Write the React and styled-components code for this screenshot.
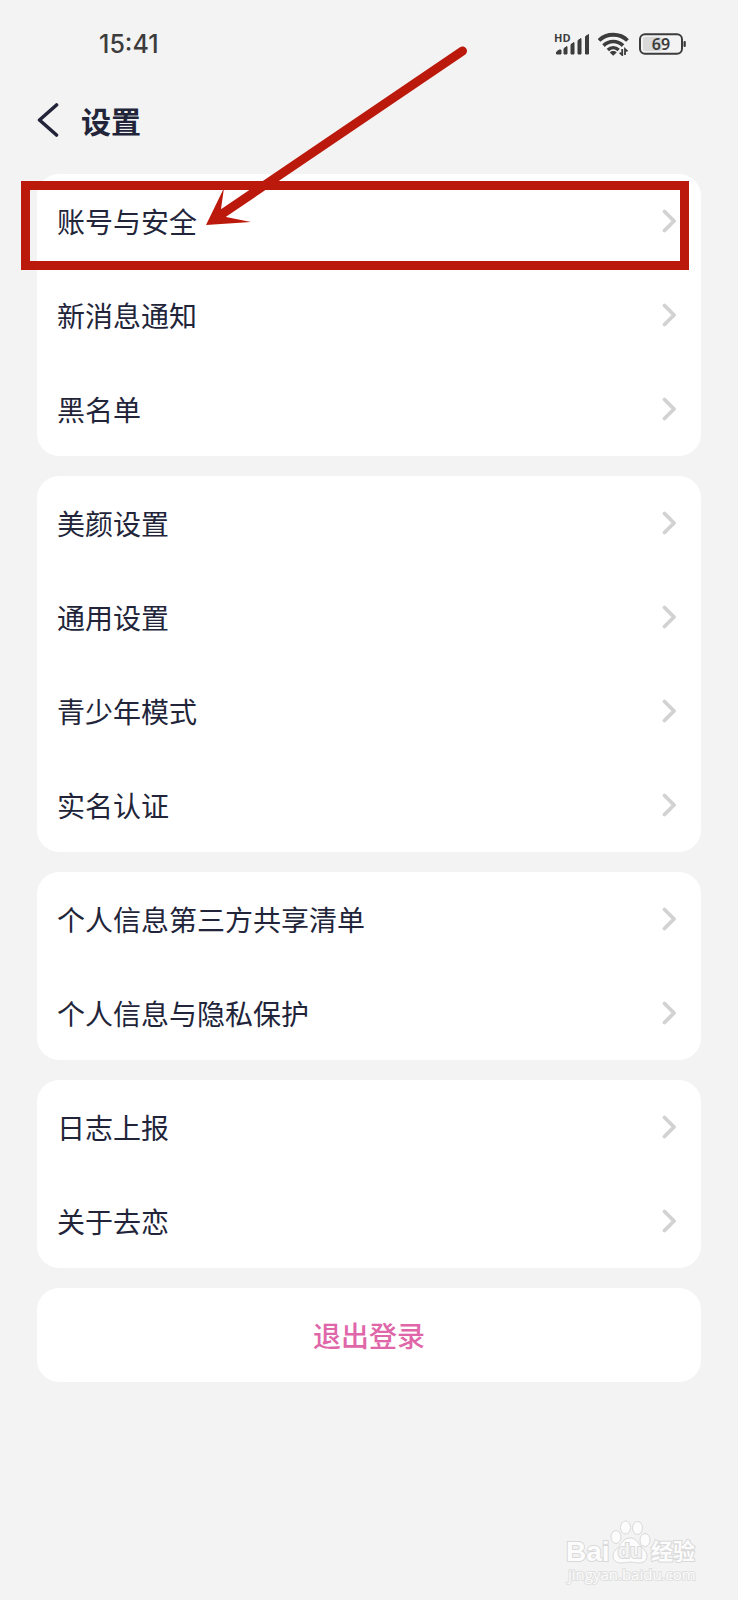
import React from "react";
import styled, { createGlobalStyle } from "styled-components";

const COLORS = {
  page: "#f3f3f3",
  card: "#ffffff",
  text: "#22253a",
  status: "#3c3c3c",
  chevron: "#d2d2d2",
  pink: "#df66a8",
  mark: "#bb190c",
};

const GlobalStyle = createGlobalStyle`
  * {
    box-sizing: border-box;
  }

  body {
    margin: 0;
    background: ${COLORS.page};
    color: ${COLORS.text};
    font-family: "Noto Sans CJK SC", sans-serif;
  }

  button {
    padding: 0;
    border: 0;
    background: none;
    color: inherit;
    font: inherit;
    cursor: pointer;
  }
`;

const Page = styled.div`
  position: relative;
  min-height: 100vh;
`;

const StatusBar = styled.div`
  display: flex;
  justify-content: space-between;
  align-items: center;
  height: 88px;
  padding: 0 52px 0 99px;
  color: ${COLORS.status};
`;

const Clock = styled.time`
  font-family: Inter, sans-serif;
  font-size: 25px;
  font-weight: 500;
  line-height: 32px;
`;

const StatusIcons = styled.div`
  display: flex;
  align-items: center;
  gap: 8px;

  svg {
    display: block;
  }
`;

const Header = styled.header`
  display: flex;
  align-items: center;
  gap: 22px;
  height: 64px;
  padding: 0 37px;
`;

const BackButton = styled.button`
  display: flex;
`;

const Title = styled.h1`
  margin: 0;
  font-size: 30px;
  font-weight: 700;
  line-height: 40px;
`;

const Content = styled.main`
  display: flex;
  flex-direction: column;
  gap: 20px;
  padding: 22px 37px 120px;
`;

const Card = styled.ul`
  margin: 0;
  padding: 0;
  border-radius: 22px;
  background: ${COLORS.card};
  list-style: none;
`;

const Item = styled.li`
  position: relative;
`;

const Row = styled.button`
  display: flex;
  justify-content: ${({ $centered }) => ($centered ? "center" : "space-between")};
  align-items: center;
  width: 100%;
  height: 94px;
  padding: 0 24px 0 ${({ $centered }) => ($centered ? 24 : 20)}px;
  color: ${({ $centered }) => ($centered ? COLORS.pink : COLORS.text)};
  font-size: 28px;
  font-weight: ${({ $centered }) => ($centered ? 500 : 400)};
  line-height: 40px;
`;

const LogoutCard = styled.div`
  border-radius: 22px;
  background: ${COLORS.card};
`;

const Highlight = styled.div`
  position: absolute;
  top: 7px;
  right: 12px;
  bottom: -2px;
  left: -16px;
  border: 9px solid ${COLORS.mark};
  pointer-events: none;
`;

const Pointer = styled.svg`
  position: absolute;
  top: -131px;
  left: 163px;
  pointer-events: none;
`;

const Watermark = styled.svg`
  position: absolute;
  right: 34px;
  bottom: 12px;
`;

const groups = [
  ["账号与安全", "新消息通知", "黑名单"],
  ["美颜设置", "通用设置", "青少年模式", "实名认证"],
  ["个人信息第三方共享清单", "个人信息与隐私保护"],
  ["日志上报", "关于去恋"],
];

const highlighted = "账号与安全";

const BackIcon = () => (
  <svg width="22" height="36" viewBox="0 0 22 36" fill="none" aria-hidden="true">
    <path
      d="M19.500 3 2.500 18 19.500 33"
      stroke={COLORS.text}
      strokeWidth="3.600"
      strokeLinecap="round"
      strokeLinejoin="round"
    />
  </svg>
);

const Chevron = () => (
  <svg width="15" height="24" viewBox="0 0 15 24" fill="none" aria-hidden="true">
    <path
      d="M2.500 2.500 12 12 2.500 21.500"
      stroke={COLORS.chevron}
      strokeWidth="3.800"
      strokeLinecap="round"
      strokeLinejoin="round"
    />
  </svg>
);

const SignalIcon = () => (
  <svg width="36" height="32" viewBox="0 -4 36 32" fill="currentColor">
    <text x="0" y="10" fontFamily="Open Sans, sans-serif" fontSize="11" fontWeight="700">
      HD
    </text>
    <g stroke="currentColor" strokeWidth="1" strokeLinejoin="round">
      <path d="M2.500 22v-2l2.500-2h2v4ZM10 22v-5.500l3-2V22ZM17 22v-9.500l3-2V22ZM24 22V8.500l3-2V22ZM31.500 22V4.500l3-2V22Z" />
    </g>
  </svg>
);

const WifiIcon = () => (
  <svg width="32" height="24" viewBox="0 0 32 24" fill="none" stroke="currentColor">
    <path d="M1 8.500C8.500.8 22 .8 29.500 8.500" strokeWidth="3.800" />
    <path d="M5.500 13.600c5.500-5.400 14-5.400 19.500 0" strokeWidth="3.600" />
    <path d="M9.800 18c3.200-3 7.700-3 10.900 0" strokeWidth="3.400" />
    <path d="M11.800 20.500c2-1.900 4.900-1.900 6.900 0L15.200 23.800Z" fill="currentColor" stroke="none" />
    <path d="M24.200 17v6l-2.500-2.300M27 23v-6l2.500 2.300" strokeWidth="1.800" />
  </svg>
);

const BatteryIcon = () => (
  <svg width="48" height="22" viewBox="0 0 48 22" fill="none">
    <rect x="5" y="4" width="19" height="14" rx="2" fill="#d9d9d9" />
    <rect x="2" y="1.200" width="42" height="19.600" rx="5" stroke="currentColor" strokeWidth="2" />
    <rect x="45.500" y="8" width="2.300" height="6" rx="1" fill="currentColor" />
    <text
      x="23"
      y="17"
      fill="currentColor"
      fontFamily="Noto Sans, sans-serif"
      fontSize="16"
      fontWeight="600"
      textAnchor="middle"
    >
      69
    </text>
  </svg>
);

const Arrow = () => (
  <Pointer width="270" height="190" viewBox="0 0 270 190" aria-hidden="true">
    <path d="M22 171 262.500 8" stroke={COLORS.mark} strokeWidth="9" strokeLinecap="round" />
    <path d="m6 182 18-37-3 21 5 8 25 5Z" fill={COLORS.mark} />
  </Pointer>
);

const BaiduMark = () => (
  <Watermark
    width="140"
    height="68"
    viewBox="0 0 140 68"
    fill="#fcfcfc"
    stroke="#d9d9d9"
    strokeWidth="1"
  >
    <text
      x="2"
      y="41"
      fontFamily="Liberation Sans, sans-serif"
      fontSize="28"
      fontWeight="700"
      strokeWidth="2"
      paintOrder="stroke"
    >
      Bai
    </text>
    <ellipse cx="52" cy="17" rx="5" ry="6.500" />
    <ellipse cx="61.500" cy="7.500" rx="5" ry="6.500" />
    <ellipse cx="73.500" cy="8" rx="5" ry="6.500" />
    <ellipse cx="81" cy="20" rx="5" ry="6.500" />
    <path d="M66 18c5 0 7 3 10 7s7 6 7 11-4 7-8 7c-3 0-6-1-9-1s-6 1-9 1c-5 0-8-3-8-7 0-5 4-7 7-11s5-7 10-7Z" />
    <text
      x="66"
      y="38"
      fill="#f3f3f3"
      fontFamily="Liberation Sans, sans-serif"
      fontSize="20"
      fontWeight="700"
      strokeWidth="2"
      textAnchor="middle"
      paintOrder="stroke"
    >
      du
    </text>
    <text
      x="87"
      y="39"
      fontFamily="Noto Sans CJK SC, sans-serif"
      fontSize="22"
      fontWeight="700"
      strokeWidth="2"
      paintOrder="stroke"
    >
      经验
    </text>
    <text
      x="4"
      y="60"
      fontFamily="Open Sans, sans-serif"
      fontSize="15"
      stroke="#e0e0e0"
      strokeWidth="2"
      paintOrder="stroke"
    >
      jingyan.baidu.com
    </text>
  </Watermark>
);

const App = () => {
  return (
    <Page>
      <GlobalStyle />
      <StatusBar>
        <Clock>15:41</Clock>
        <StatusIcons>
          <SignalIcon />
          <WifiIcon />
          <BatteryIcon />
        </StatusIcons>
      </StatusBar>
      <Header>
        <BackButton aria-label="返回">
          <BackIcon />
        </BackButton>
        <Title>设置</Title>
      </Header>
      <Content>
        {groups.map((items, index) => (
          <Card key={index}>
            {items.map(label => (
              <Item key={label}>
                <Row>
                  {label}
                  <Chevron />
                </Row>
                {label === highlighted && (
                  <>
                    <Highlight />
                    <Arrow />
                  </>
                )}
              </Item>
            ))}
          </Card>
        ))}
        <LogoutCard>
          <Row $centered>退出登录</Row>
        </LogoutCard>
      </Content>
      <BaiduMark />
    </Page>
  );
};

export default App;
